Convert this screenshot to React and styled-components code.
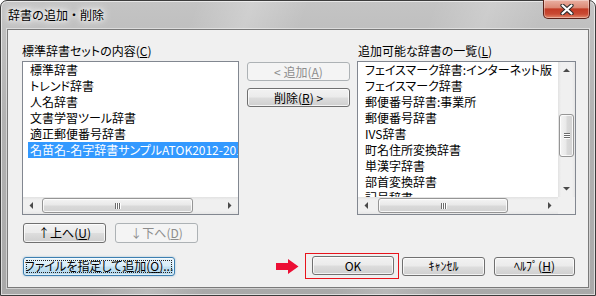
import React from 'react';
import styled, { createGlobalStyle, css } from 'styled-components';

const GlobalStyle = createGlobalStyle`
  html, body { margin: 0; padding: 0; background: #fff; }
  body { font-family: "Noto Sans CJK JP", "Liberation Sans", sans-serif; }
  * { box-sizing: border-box; }
`;

const uiFont = css`
  font-family: "Noto Sans CJK JP", "Liberation Sans", sans-serif;
  font-size: 12px;
  line-height: 16px;
  font-feature-settings: "palt" 1;
`;

const Window = styled.div`
  width: 596px;
  height: 296px;
  display: flex;
  flex-direction: column;
  padding: 0 6px 7px;
  border: 1px solid #3c3c3c;
  border-radius: 7px 7px 0 0;
  background:
    linear-gradient(110deg, rgba(255,255,255,0) 28%, rgba(255,255,255,0.22) 36%, rgba(255,255,255,0) 44%,
      rgba(255,255,255,0) 62%, rgba(255,255,255,0.18) 70%, rgba(255,255,255,0) 78%),
    linear-gradient(#c4c4c4, #b2b2b2 40%, #a9a9a9);
  box-shadow: inset 0 0 0 1px rgba(255,255,255,0.6);
`;

const TitleBar = styled.div`
  height: 28px;
  flex: none;
  display: flex;
  align-items: flex-start;
  justify-content: space-between;
`;

const Title = styled.div`
  ${uiFont};
  font-feature-settings: normal;
  margin: 6px 0 0 1px;
  color: #000;
  text-shadow: 0 0 4px #fff, 0 0 8px #fff, 0 0 12px rgba(255,255,255,0.9);
`;

const CloseButton = styled.div`
  width: 47px;
  height: 19px;
  margin: -1px -1px 0 0;
  display: flex;
  align-items: center;
  justify-content: center;
  border: 1px solid #5a2118;
  border-top: none;
  border-radius: 0 0 5px 5px;
  background: linear-gradient(#eab0a2 0%, #dc8a76 42%, #c23b25 50%, #c94a33 78%, #e28a6c 100%);
  box-shadow: inset 0 0 0 1px rgba(255,255,255,0.35);
`;

const Client = styled.div`
  flex: 1;
  display: flex;
  flex-direction: column;
  padding: 13px 12px 0 14px;
  background: #f0f0f0;
  border: 1px solid #7a7a7a;
  box-shadow: 0 0 0 1px rgba(255,255,255,0.45);
`;

const Main = styled.div`
  display: grid;
  grid-template-columns: 217px 118px 219px;
  grid-template-rows: 18px 154px;
`;

const Label = styled.div`
  ${uiFont};
  color: #000;
  white-space: nowrap;
  margin-left: ${p => p.$indent || 0}px;
`;

const Accel = styled.span`
  text-decoration: underline;
  text-underline-offset: 1px;
`;

const ListBox = styled.div`
  border: 1px solid #828790;
  background: #fff;
  display: grid;
  overflow: hidden;
  grid-template-columns: ${p => (p.$vscroll ? 'minmax(0, 1fr) 17px' : 'minmax(0, 1fr)')};
  grid-template-rows: minmax(0, 1fr) 17px;
`;

const Items = styled.div`
  overflow: hidden;
  padding-left: 5px;
  min-width: 0;
`;

const Item = styled.div`
  ${uiFont};
  height: 16px;
  padding-left: 2px;
  white-space: nowrap;
  color: ${p => (p.$selected ? '#fff' : '#000')};
  background: ${p => (p.$selected ? '#3399ff' : 'transparent')};
`;

const ScrollBar = styled.div`
  display: flex;
  flex-direction: ${p => (p.$vertical ? 'column' : 'row')};
  background: ${p =>
    p.$vertical
      ? 'linear-gradient(90deg, #e2e2e2, #f0f0f0 18%, #f0f0f0 82%, #e6e6e6)'
      : 'linear-gradient(#e2e2e2, #f0f0f0 18%, #f0f0f0 82%, #e6e6e6)'};
  min-width: 0;
  min-height: 0;
`;

const ArrowButton = styled.div`
  flex: none;
  width: 17px;
  height: 17px;
  display: flex;
  align-items: center;
  justify-content: center;
`;

const Track = styled.div`
  flex: 1;
  display: flex;
  flex-direction: ${p => (p.$vertical ? 'column' : 'row')};
  min-width: 0;
  min-height: 0;
`;

const Thumb = styled.div`
  flex: none;
  display: flex;
  align-items: center;
  justify-content: center;
  gap: 1px;
  flex-direction: ${p => (p.$vertical ? 'column' : 'row')};
  border: 1px solid #959595;
  border-radius: 3px;
  box-shadow: inset 0 0 0 1px rgba(255,255,255,0.8);
  ${p =>
    p.$vertical
      ? css`
          width: 15px;
          margin-left: 1px;
          background: linear-gradient(90deg, #f4f4f4, #e9e9e9 45%, #d9d9d9 55%, #d2d2d2);
        `
      : css`
          height: 15px;
          margin-top: 1px;
          background: linear-gradient(#f4f4f4, #e9e9e9 45%, #d9d9d9 55%, #d2d2d2);
        `}
`;

const Grip = styled.span`
  display: block;
  background: #6b6b6b;
  box-shadow: ${p => (p.$vertical ? '0 1px 0 #fff' : '1px 0 0 #fff')};
  width: ${p => (p.$vertical ? '6px' : '1px')};
  height: ${p => (p.$vertical ? '1px' : '6px')};
`;

const Corner = styled.div`
  background: #f0f0f0;
`;

const MiddleColumn = styled.div`
  padding: 1px 7px 0 8px;
  display: flex;
  flex-direction: column;
  gap: 7px;
`;

const Button = styled.div`
  position: relative;
  flex: none;
  width: ${p => p.$w}px;
  height: ${p => p.$h || 20}px;
  display: flex;
  align-items: center;
  justify-content: center;
  ${uiFont};
  color: #000;
  white-space: nowrap;
  border: 1px solid #707070;
  border-radius: 3px;
  background: linear-gradient(#f2f2f2 0%, #ebebeb 48%, #dddddd 52%, #cfcfcf 100%);
  box-shadow: inset 0 0 0 1px rgba(255,255,255,0.75);
  ${p =>
    p.$disabled &&
    css`
      color: #8d8d8d;
      border-color: #adb2b5;
      background: #f4f4f4;
      box-shadow: none;
    `}
  ${p =>
    p.$focused &&
    css`
      border-color: #3c7fb1;
      background: linear-gradient(#e6f3fb 0%, #d9edf8 48%, #c3e2f3 52%, #b3d7ec 100%);
      box-shadow: inset 0 0 0 1px rgba(255,255,255,0.6), 0 0 2px rgba(60,127,177,0.5);
      &::after {
        content: '';
        position: absolute;
        inset: 2px;
        border: 1px dotted #222;
      }
    `}
`;

const Caption = styled.span`
  white-space: nowrap;
  font-feature-settings: ${p => (p.$halfwidth ? 'normal' : '"palt" 1')};
`;

const OrderRow = styled.div`
  display: flex;
  gap: 9px;
  margin: 8px 0 0 1px;
`;

const BottomRow = styled.div`
  display: flex;
  align-items: center;
  justify-content: space-between;
  height: 26px;
  margin: 10px 1px 0 1px;
`;

const RightGroup = styled.div`
  display: flex;
  align-items: center;
`;

const PointerArrow = styled.svg`
  flex: none;
  margin-right: 6px;
`;

const Highlight = styled.div`
  border: 1px solid #e8141c;
  padding: 2px 4px 3px 6px;
  margin-right: 3px;
`;

const Spacer = styled.div`
  width: 9px;
  flex: none;
`;

function Triangle({ dir }) {
  const pts = {
    left: '5,0 5,7 1.5,3.5',
    right: '2,0 2,7 5.5,3.5',
    up: '0,5 7,5 3.5,1.5',
    down: '0,2 7,2 3.5,5.5',
  }[dir];
  return (
    <svg width="7" height="7" viewBox="0 0 7 7">
      <polygon points={pts} fill="#4a4a4a" />
    </svg>
  );
}

function HScroll({ offset, size }) {
  return (
    <ScrollBar>
      <ArrowButton><Triangle dir="left" /></ArrowButton>
      <Track>
        <div style={{ width: offset, flex: 'none' }} />
        <Thumb style={{ width: size }}>
          <Grip /><Grip /><Grip />
        </Thumb>
      </Track>
      <ArrowButton><Triangle dir="right" /></ArrowButton>
    </ScrollBar>
  );
}

function VScroll({ offset, size }) {
  return (
    <ScrollBar $vertical>
      <ArrowButton><Triangle dir="up" /></ArrowButton>
      <Track $vertical>
        <div style={{ height: offset, flex: 'none' }} />
        <Thumb $vertical style={{ height: size }}>
          <Grip $vertical /><Grip $vertical /><Grip $vertical />
        </Thumb>
      </Track>
      <ArrowButton><Triangle dir="down" /></ArrowButton>
    </ScrollBar>
  );
}

const standard = [
  '標準辞書',
  'トレンド辞書',
  '人名辞書',
  '文書学習ツール辞書',
  '適正郵便番号辞書',
  '名苗名-名字辞書サンプルATOK2012-2013',
];

const available = [
  'フェイスマーク辞書:インターネット版',
  'フェイスマーク辞書',
  '郵便番号辞書:事業所',
  '郵便番号辞書',
  'IVS辞書',
  '町名住所変換辞書',
  '単漢字辞書',
  '部首変換辞書',
  '記号辞書',
];

export default function App() {
  return (
    <>
      <GlobalStyle />
      <Window>
        <TitleBar>
          <Title>辞書の追加・削除</Title>
          <CloseButton>
            <svg width="14" height="11" viewBox="0 0 14 11">
              <path d="M2.5 1.5 L11.5 9.5 M11.5 1.5 L2.5 9.5" stroke="#2a2a2a" strokeWidth="4.2" strokeLinecap="round" />
              <path d="M2.5 1.5 L11.5 9.5 M11.5 1.5 L2.5 9.5" stroke="#fff" strokeWidth="2.2" strokeLinecap="round" />
            </svg>
          </CloseButton>
        </TitleBar>
        <Client>
          <Main>
            <Label>標準辞書セットの内容(<Accel>C</Accel>)</Label>
            <div />
            <Label $indent={1}>追加可能な辞書の一覧(<Accel>L</Accel>)</Label>

            <ListBox>
              <Items>
                {standard.map((name, i) => (
                  <Item key={name} $selected={i === standard.length - 1}>{name}</Item>
                ))}
              </Items>
              <HScroll offset={2} size={151} />
            </ListBox>

            <MiddleColumn>
              <Button $w={103} $h={19} $disabled><Caption>&lt; 追加(<Accel>A</Accel>)</Caption></Button>
              <Button $w={103} $h={19}><Caption>削除(<Accel>R</Accel>) &gt;</Caption></Button>
            </MiddleColumn>

            <ListBox $vscroll>
              <Items>
                {available.map(name => (
                  <Item key={name}>{name}</Item>
                ))}
              </Items>
              <VScroll offset={35} size={43} />
              <HScroll offset={3} size={130} />
              <Corner />
            </ListBox>
          </Main>

          <OrderRow>
            <Button $w={83}><Caption>↑上へ(<Accel>U</Accel>)</Caption></Button>
            <Button $w={83} $disabled><Caption>↓下へ(<Accel>D</Accel>)</Caption></Button>
          </OrderRow>

          <BottomRow>
            <Button $w={152} $h={19} $focused>
              <Caption>ファイルを指定して追加(<Accel>O</Accel>)...</Caption>
            </Button>
            <RightGroup>
              <PointerArrow width="23" height="15" viewBox="0 0 23 15">
                <polygon points="0,4 12,4 12,0 22.5,7.5 12,15 12,11 0,11" fill="#ec0f35" />
              </PointerArrow>
              <Highlight>
                <Button $w={82} $h={19}><Caption>OK</Caption></Button>
              </Highlight>
              <Button $w={83} $h={19}><Caption $halfwidth>ｷｬﾝｾﾙ</Caption></Button>
              <Spacer />
              <Button $w={81} $h={19}><Caption $halfwidth>ﾍﾙﾌﾟ(<Accel>H</Accel>)</Caption></Button>
            </RightGroup>
          </BottomRow>
        </Client>
      </Window>
    </>
  );
}
